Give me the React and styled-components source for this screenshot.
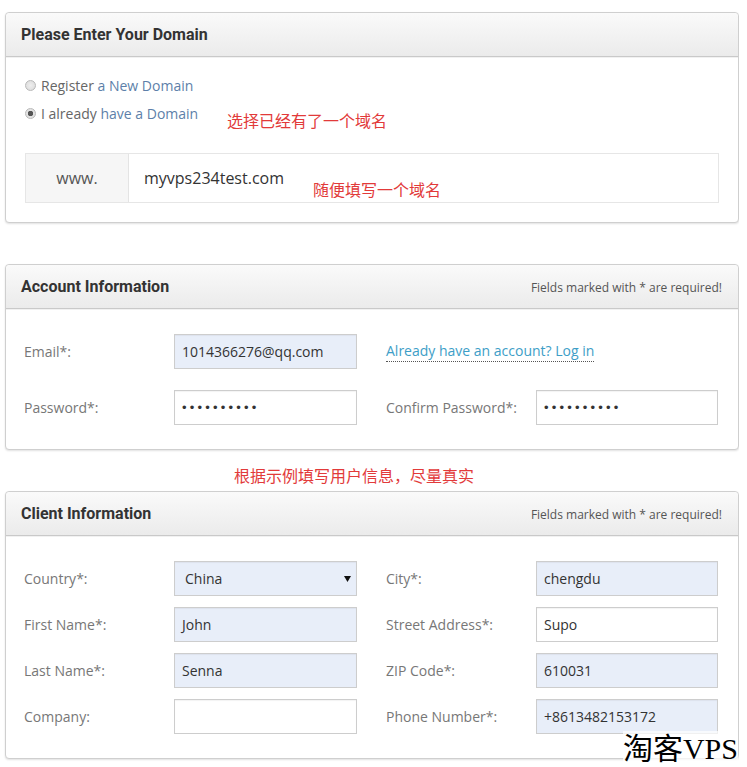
import React from 'react';
import styled, { createGlobalStyle } from 'styled-components';

const GlobalStyle = createGlobalStyle`
    body {
        margin: 0;
        background: #fff;
        font-family: "Open Sans", "Noto Sans CJK SC", sans-serif;
        color: #555;
    }
`;

const accountRows = [
    [
        { label: 'Email*:', value: '1014366276@qq.com', filled: true },
        { link: 'Already have an account? Log in' },
    ],
    [
        { label: 'Password*:', value: '••••••••••', secret: true },
        { label: 'Confirm Password*:', value: '••••••••••', secret: true },
    ],
];

const clientRows = [
    [
        { label: 'Country*:', value: 'China', filled: true, select: true },
        { label: 'City*:', value: 'chengdu', filled: true },
    ],
    [
        { label: 'First Name*:', value: 'John', filled: true },
        { label: 'Street Address*:', value: 'Supo' },
    ],
    [
        { label: 'Last Name*:', value: 'Senna', filled: true },
        { label: 'ZIP Code*:', value: '610031', filled: true },
    ],
    [
        { label: 'Company:', value: '' },
        { label: 'Phone Number*:', value: '+8613482153172', filled: true },
    ],
];

const FieldPair = ({ cell }) => {
    if (cell.link) {
        return (
            <Pair>
                <DottedLink>{cell.link}</DottedLink>
            </Pair>
        );
    }
    return (
        <Pair>
            <Label>{cell.label}</Label>
            <Field $filled={cell.filled} $secret={cell.secret} $select={cell.select}>
                {cell.value}
                {cell.select && (
                    <Caret width="7" height="6" viewBox="0 0 7 6">
                        <path d="M0 0h7L3.5 6z" fill="#111" />
                    </Caret>
                )}
            </Field>
        </Pair>
    );
};

const FormGrid = ({ rows, rowGap }) => (
    <Grid $rowGap={rowGap}>
        {rows.map((row, i) =>
            row.map((cell, j) => <FieldPair key={`${i}-${j}`} cell={cell} />)
        )}
    </Grid>
);

const App = () => {
    return (
        <Page>
            <GlobalStyle />
            <Panel>
                <PanelHeader>
                    <Title>Please Enter Your Domain</Title>
                </PanelHeader>
                <DomainBody>
                    <RadioRow>
                        <Radio />
                        Register <BlueText>a New Domain</BlueText>
                    </RadioRow>
                    <RadioRow>
                        <Radio $checked />
                        I already <BlueText>have a Domain</BlueText>
                        <Note $top={11} $left={202}>选择已经有了一个域名</Note>
                    </RadioRow>
                    <DomainGroup>
                        <Addon>www.</Addon>
                        <DomainInput>
                            myvps234test.com
                            <Note $top={25} $left={184}>随便填写一个域名</Note>
                        </DomainInput>
                    </DomainGroup>
                </DomainBody>
            </Panel>

            <Spacer />

            <Panel>
                <PanelHeader>
                    <Title>Account Information</Title>
                    <Required>Fields marked with * are required!</Required>
                </PanelHeader>
                <FormBody>
                    <FormGrid rows={accountRows} rowGap={21} />
                </FormBody>
            </Panel>

            <Spacer>
                <GapNote>根据示例填写用户信息，尽量真实</GapNote>
            </Spacer>

            <Panel>
                <PanelHeader>
                    <Title>Client Information</Title>
                    <Required>Fields marked with * are required!</Required>
                </PanelHeader>
                <FormBody $bottom={24}>
                    <FormGrid rows={clientRows} rowGap={11} />
                </FormBody>
            </Panel>

            <Watermark>淘客VPS</Watermark>
        </Page>
    );
};

export default App;

const Page = styled.div`
    position: relative;
    width: 739px;
    height: 767px;
    padding: 12px 0 0 5px;
    box-sizing: border-box;
    overflow: hidden;
`;

const Panel = styled.section`
    border: 1px solid #cfcfcf;
    border-radius: 4px;
    background: #fff;
    box-shadow: 0 1px 2px rgba(0, 0, 0, 0.12);
`;

const PanelHeader = styled.div`
    height: 44px;
    display: flex;
    align-items: center;
    justify-content: space-between;
    padding: 0 16px 1px 15px;
    box-sizing: border-box;
    background: linear-gradient(#fafafa, #ebebeb);
    border-bottom: 1px solid #c9c9c9;
    border-radius: 4px 4px 0 0;
    box-shadow: 0 1px 0 #f1f1f1;
`;

const Title = styled.h3`
    margin: 0;
    font-family: Roboto, "Liberation Sans", sans-serif;
    font-weight: 700;
    font-size: 16px;
    color: #333;
`;

const Required = styled.span`
    font-size: 12px;
    color: #555;
    padding-top: 2px;
`;

const DomainBody = styled.div`
    padding: 14px 19px 19px 19px;
`;

const RadioRow = styled.div`
    position: relative;
    display: flex;
    align-items: center;
    height: 28px;
    font-size: 14px;
    color: #666;
    white-space: pre;
`;

const BlueText = styled.span`
    color: #5d7fa9;
`;

const Radio = styled.span`
    width: 11px;
    height: 11px;
    margin: 0 5px 0 0;
    border-radius: 50%;
    border: 1px solid #b9b9b9;
    background: radial-gradient(circle, ${p => (p.$checked ? '#555 0 2.5px, #e2e2e2 3px' : '#eee 0, #d9d9d9 100%')});
    box-sizing: border-box;
    flex: none;
`;

const Note = styled.span`
    position: absolute;
    top: ${p => p.$top}px;
    left: ${p => p.$left}px;
    font-family: "Noto Sans CJK SC", sans-serif;
    font-size: 16px;
    line-height: 20px;
    color: #e23a3a;
    white-space: nowrap;
`;

const DomainGroup = styled.div`
    display: flex;
    height: 48px;
    margin-top: 26px;
    border: 1px solid #e6e6e6;
`;

const Addon = styled.div`
    width: 102px;
    display: flex;
    align-items: center;
    justify-content: center;
    background: #f6f6f6;
    border-right: 1px solid #e4e4e4;
    font-size: 16px;
    color: #555;
`;

const DomainInput = styled.div`
    position: relative;
    flex: 1;
    display: flex;
    align-items: center;
    padding-left: 15px;
    font-size: 16px;
    color: #333;
`;

const Spacer = styled.div`
    height: 41px;
    display: flex;
    align-items: flex-end;
`;

const GapNote = styled.span`
    margin: 0 0 6px 229px;
    font-family: "Noto Sans CJK SC", sans-serif;
    font-size: 16px;
    line-height: 20px;
    color: #e23a3a;
`;

const FormBody = styled.div`
    padding: 25px 20px ${p => p.$bottom ?? 24}px 18px;
`;

const Grid = styled.div`
    display: grid;
    grid-template-columns: 333px 332px;
    grid-auto-rows: 35px;
    column-gap: 29px;
    row-gap: ${p => p.$rowGap}px;
`;

const Pair = styled.div`
    display: flex;
    align-items: center;
`;

const Label = styled.div`
    width: 150px;
    flex: none;
    font-size: 14px;
    color: #777;
`;

const Field = styled.div`
    position: relative;
    flex: 1;
    height: 35px;
    display: flex;
    align-items: center;
    padding-left: ${p => (p.$select ? '10px' : '7px')};
    box-sizing: border-box;
    border: 1px solid #cdcdcd;
    background: ${p => (p.$filled ? '#e8eef9' : '#fff')};
    box-shadow: inset 0 1px 1px rgba(0, 0, 0, 0.05);
    font-size: ${p => (p.$secret ? '13px' : '14px')};
    letter-spacing: ${p => (p.$secret ? '3.2px' : '0')};
    color: #333;
    ${p => p.$secret && 'font-family: "Liberation Sans", sans-serif;'}
`;

const Caret = styled.svg`
    position: absolute;
    right: 5px;
    top: 14px;
`;

const DottedLink = styled.a`
    font-size: 14px;
    color: #3d9ec7;
    text-decoration: none;
    border-bottom: 1px dotted #555;
    padding-bottom: 1px;
    white-space: nowrap;
`;

const Watermark = styled.div`
    position: absolute;
    right: 1px;
    bottom: 0;
    font-family: "Liberation Serif", "Noto Sans CJK SC", serif;
    font-size: 30px;
    line-height: 36px;
    color: #000;
    background: rgba(255, 255, 255, 0.7);
`;
